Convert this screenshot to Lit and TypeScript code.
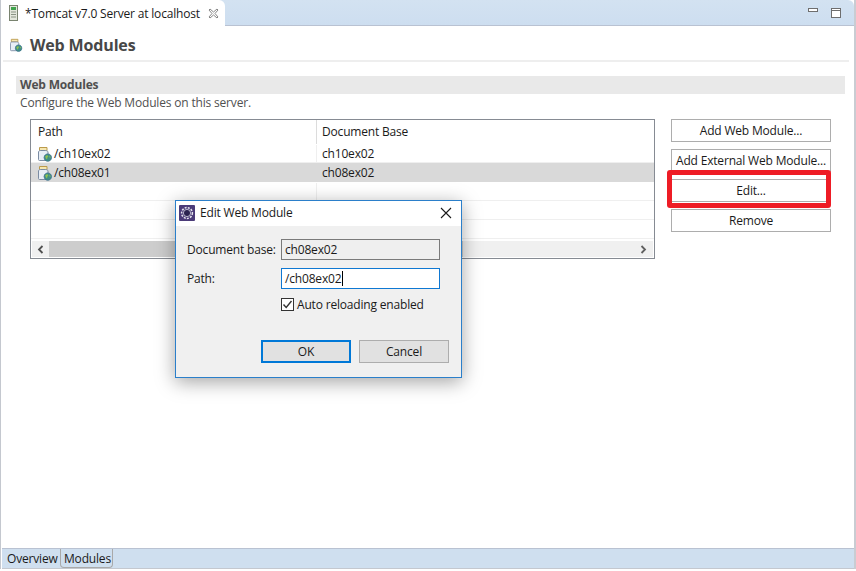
import { LitElement, html, css } from "lit";
import { customElement } from "lit/decorators.js";

const moduleIcon = (s = 16) => html`<svg class="ico" width=${s} height=${s} viewBox="2 0 16 16">
  <path d="M3.5 1.5h7.5v3H3.5z" fill="#f6e7b0" stroke="#bb9a4c" stroke-width="1"/>
  <path d="M2.5 6c0-1 1-1.5 2-1.5h5c1 0 2.5.5 2.5 1.5v7.5c0 .6-.5 1-1 1H3.5c-.6 0-1-.4-1-1z" fill="#e8eef6" stroke="#7b8ca3" stroke-width="1"/>
  <circle cx="11.8" cy="11.6" r="3.7" fill="#3f8f86"/>
  <path d="M9.2 10.5c1-1.5 2.5-1.5 3-.5s-1 1-1 2.5-1.2.5-2-2zM13.2 9.5l1.6 1.6-1 1z" fill="#8fc253"/>
  <path d="M11.8 7.9a3.7 3.7 0 1 1-.01 0" fill="none" stroke="#3d6f8f" stroke-width=".8"/>
</svg>`;

const rows = [
  { path: "/ch10ex02", base: "ch10ex02", sel: false },
  { path: "/ch08ex01", base: "ch08ex02", sel: true },
];

@customElement("app-root")
export class AppRoot extends LitElement {
  static styles = css`
    :host {
      display: block;
      width: 856px;
      height: 571px;
      position: relative;
      overflow: hidden;
      background: #fff;
      font-family: "Open Sans", "Noto Sans", "Liberation Sans", sans-serif;
      font-size: 12px;
      letter-spacing: -0.18px;
      color: #1a1a1a;
    }
    * { box-sizing: border-box; }
    .editor {
      height: 569px;
      display: flex;
      flex-direction: column;
      border-left: 1px solid #c4c8cf;
      border-right: 2px solid #c9ccd2;
    }
    .tabbar {
      height: 26px;
      flex: none;
      display: flex;
      justify-content: space-between;
      background: linear-gradient(#d3e2f1, #cddef0);
      border-bottom: 1px solid #b9c2d2;
      border-top-right-radius: 6px;
    }
    .tab {
      width: 224px;
      height: 26px;
      background: #fff;
      border-top-right-radius: 6px;
      display: flex;
      align-items: center;
      padding-left: 7px;
      gap: 5px;
      white-space: nowrap;
    }
    .tab .close { margin-left: 3px; }
    .winbtns { display: flex; gap: 13px; padding: 8px 13px 0 0; align-items: flex-start; }
    .content { flex: 1; display: flex; flex-direction: column; background: #fff; }
    .head {
      height: 36px;
      flex: none;
      margin: 0 5px 0 2px;
      display: flex;
      align-items: center;
      gap: 6px;
      padding: 3px 0 0 7px;
      border-bottom: 2px solid #eeeeee;
      font-size: 16px;
      letter-spacing: -0.15px;
      font-weight: 700;
      color: #474747;
    }
    .section { margin: 14px 9px 0 15px; flex: 1; }
    .sec-title {
      height: 18px;
      background: #e9e9e9;
      padding-left: 4px;
      font-weight: 700;
      line-height: 18px;
      color: #505050;
    }
    .sec-desc { height: 25px; padding: 1px 0 0 4px; line-height: 16px; color: #505050; }
    .body { display: flex; margin-left: 14px; margin-right: 15px; gap: 16px; align-items: flex-start; }
    .table {
      width: 625px;
      height: 140px;
      border: 1px solid #868b93;
      display: flex;
      flex-direction: column;
      flex: none;
    }
    .r { height: 19px; flex: none; display: flex; line-height: 18px; padding-top: 1px; border-bottom: 1px solid #efefef; }
    .r.h { height: 24px; line-height: 22px; padding-top: 0; border-bottom: 0; }
    .r.sel { background: #d9d9d9; border-bottom-color: #d9d9d9; }
    .c1 { width: 285px; flex: none; padding-left: 7px; display: flex; align-items: center; white-space: nowrap; }
    .c2 { flex: 1; padding-left: 5px; border-left: 1px solid #efefef; display: flex; align-items: center; }
    .r.sel .c2 { border-left-color: #d9d9d9; }
    .r.h .c2 { border-left-color: #dcdcdc; }
    .ico { flex: none; }
    .scroll {
      flex: 1;
      margin: 2px 1px 1px;
      display: flex;
      align-items: center;
      background: #f0f0f0;
      justify-content: space-between;
      padding: 0 6px 0 5px;
      position: relative;
    }
    .thumb { position: absolute; left: 17px; right: 190px; top: 0; bottom: 0; background: #cdcdcd; }
    .btns { width: 160px; flex: none; display: flex; flex-direction: column; gap: 7px; position: relative; }
    .btn {
      height: 23px;
      border: 1px solid #adadad;
      background: #fff;
      display: flex;
      align-items: center;
      justify-content: center;
      white-space: nowrap;
    }
    .marker {
      position: absolute;
      left: -4px;
      top: 51px;
      width: 164px;
      height: 38px;
      border: 5px solid #ee1c25;
      border-radius: 3px;
      pointer-events: none;
    }
    .pages {
      height: 21px;
      flex: none;
      margin-left: 1px;
      display: flex;
      background: #cfdfef;
      border-top: 1px solid #b9c2d2;
      border-bottom: 1px solid #c4c8cf;
    }
    .page { height: 19px; line-height: 19px; }
    .page.a { padding-left: 5px; width: 58px; }
    .page.b {
      width: 53px;
      padding-left: 3px;
      border: 1px solid #a9a9a9;
      border-top: 0;
      border-bottom-left-radius: 4px;
      border-bottom-right-radius: 4px;
    }
    .dialog {
      position: absolute;
      left: 175px;
      top: 200px;
      width: 287px;
      height: 178px;
      background: #f0f0f0;
      border: 1px solid #2b7fca;
      box-shadow: 0 4px 18px rgba(0,0,0,.36);
      display: flex;
      flex-direction: column;
    }
    .d-title {
      height: 25px;
      flex: none;
      background: #fff;
      display: flex;
      align-items: center;
      padding: 0 9px 2px 3px;
      gap: 5px;
    }
    .d-title .t { flex: 1; }
    .d-body {
      padding: 13px 21px 0 11px;
      display: grid;
      grid-template-columns: 94px 159px;
      row-gap: 8px;
      align-items: center;
    }
    .inp {
      height: 21px;
      border: 1px solid #7a7a7a;
      background: #efefef;
      line-height: 19px;
      padding-left: 3px;
    }
    .inp.on { background: #fff; border-color: #0f78d2; display: flex; align-items: center; }
    .caret { width: 1px; height: 15px; background: #000; margin-left: 1px; }
    .chk { grid-column: 2; display: flex; align-items: center; gap: 3px; height: 16px; margin-top: -1px; }
    .d-foot { margin-top: auto; padding: 0 12px 14px 85px; display: flex; justify-content: space-between; }
    .d-btn {
      width: 90px;
      height: 23px;
      background: #e1e1e1;
      border: 1px solid #adadad;
      display: flex;
      align-items: center;
      justify-content: center;
    }
    .d-btn.def { border: 2px solid #0078d7; }
  `;

  render() {
    return html`
      <div class="editor">
        <div class="tabbar">
          <div class="tab">
            <svg class="ico" width="12" height="18" viewBox="0 0 12 18">
              <rect x="1.5" y="1.5" width="8" height="15" fill="#e3e7dc" stroke="#79836f"/>
              <rect x="3" y="3" width="5" height="3" fill="#3fa34d"/>
              <path d="M3 8h5M3 10.5h5M3 13h5" stroke="#8a9384" stroke-width="1"/>
            </svg>
            <span>*Tomcat v7.0 Server at localhost</span>
            <svg class="ico close" width="11" height="11" viewBox="0 0 11 11">
              <path d="M1 2 2 1 5.5 4 9 1 10 2 7 5.5 10 9 9 10 5.5 7 2 10 1 9 4 5.5z" fill="#fff" stroke="#7a7a7a" stroke-width=".9"/>
            </svg>
          </div>
          <div class="winbtns">
            <svg width="10" height="5" viewBox="0 0 10 5"><rect x=".5" y=".5" width="9" height="3" fill="#fff" stroke="#6e6e6e"/></svg>
            <svg width="10" height="11" viewBox="0 0 10 11"><rect x=".5" y=".5" width="9" height="9" fill="#fff" stroke="#6e6e6e"/><path d="M0 2.5h10" stroke="#6e6e6e"/></svg>
          </div>
        </div>
        <div class="content">
          <div class="head">${moduleIcon(14)}<span>Web Modules</span></div>
          <div class="section">
            <div class="sec-title">Web Modules</div>
            <div class="sec-desc">Configure the Web Modules on this server.</div>
            <div class="body">
              <div class="table">
                <div class="r h"><div class="c1">Path</div><div class="c2">Document Base</div></div>
                ${rows.map(
                  (r) => html`<div class="r ${r.sel ? "sel" : ""}">
                    <div class="c1">${moduleIcon()}<span>${r.path}</span></div>
                    <div class="c2">${r.base}</div>
                  </div>`
                )}
                <div class="r"><div class="c1"></div><div class="c2"></div></div>
                <div class="r"><div class="c1"></div><div class="c2"></div></div>
                <div class="r"><div class="c1"></div><div class="c2"></div></div>
                <div class="scroll">
                  <div class="thumb"></div>
                  <svg width="7" height="9" viewBox="0 0 7 9" style="position:relative"><path d="M5.5 1 2 4.5 5.5 8" fill="none" stroke="#505050" stroke-width="1.8"/></svg>
                  <svg width="7" height="9" viewBox="0 0 7 9"><path d="M1.5 1 5 4.5 1.5 8" fill="none" stroke="#606060" stroke-width="1.8"/></svg>
                </div>
              </div>
              <div class="btns">
                <div class="btn">Add Web Module...</div>
                <div class="btn">Add External Web Module...</div>
                <div class="btn">Edit...</div>
                <div class="btn">Remove</div>
                <div class="marker"></div>
              </div>
            </div>
          </div>
          <div class="pages">
            <div class="page a">Overview</div>
            <div class="page b">Modules</div>
          </div>
        </div>
      </div>
      <div class="dialog">
        <div class="d-title">
          <svg class="ico" width="16" height="16" viewBox="0 0 16 16">
            <rect width="16" height="16" rx="1" fill="#4b3b78"/>
            <circle cx="8" cy="8" r="5.4" fill="none" stroke="#e6e6ee" stroke-width="1.5" stroke-dasharray="2 1.2"/>
            <circle cx="8" cy="8" r="3.6" fill="#2b2350" stroke="#d8d8e4" stroke-width=".8"/>
          </svg>
          <span class="t">Edit Web Module</span>
          <svg width="12" height="12" viewBox="0 0 12 12"><path d="M1 1l10 10M11 1 1 11" stroke="#1a1a1a" stroke-width="1.1"/></svg>
        </div>
        <div class="d-body">
          <div>Document base:</div>
          <div class="inp">ch08ex02</div>
          <div>Path:</div>
          <div class="inp on"><span>/ch08ex02</span><span class="caret"></span></div>
          <div class="chk">
            <svg width="13" height="13" viewBox="0 0 13 13"><rect x=".5" y=".5" width="12" height="12" fill="#fff" stroke="#333"/><path d="M2.5 6.5 5.2 9.5 10.5 3" fill="none" stroke="#333" stroke-width="1.4"/></svg>
            <span>Auto reloading enabled</span>
          </div>
        </div>
        <div class="d-foot">
          <div class="d-btn def">OK</div>
          <div class="d-btn">Cancel</div>
        </div>
      </div>
    `;
  }
}
